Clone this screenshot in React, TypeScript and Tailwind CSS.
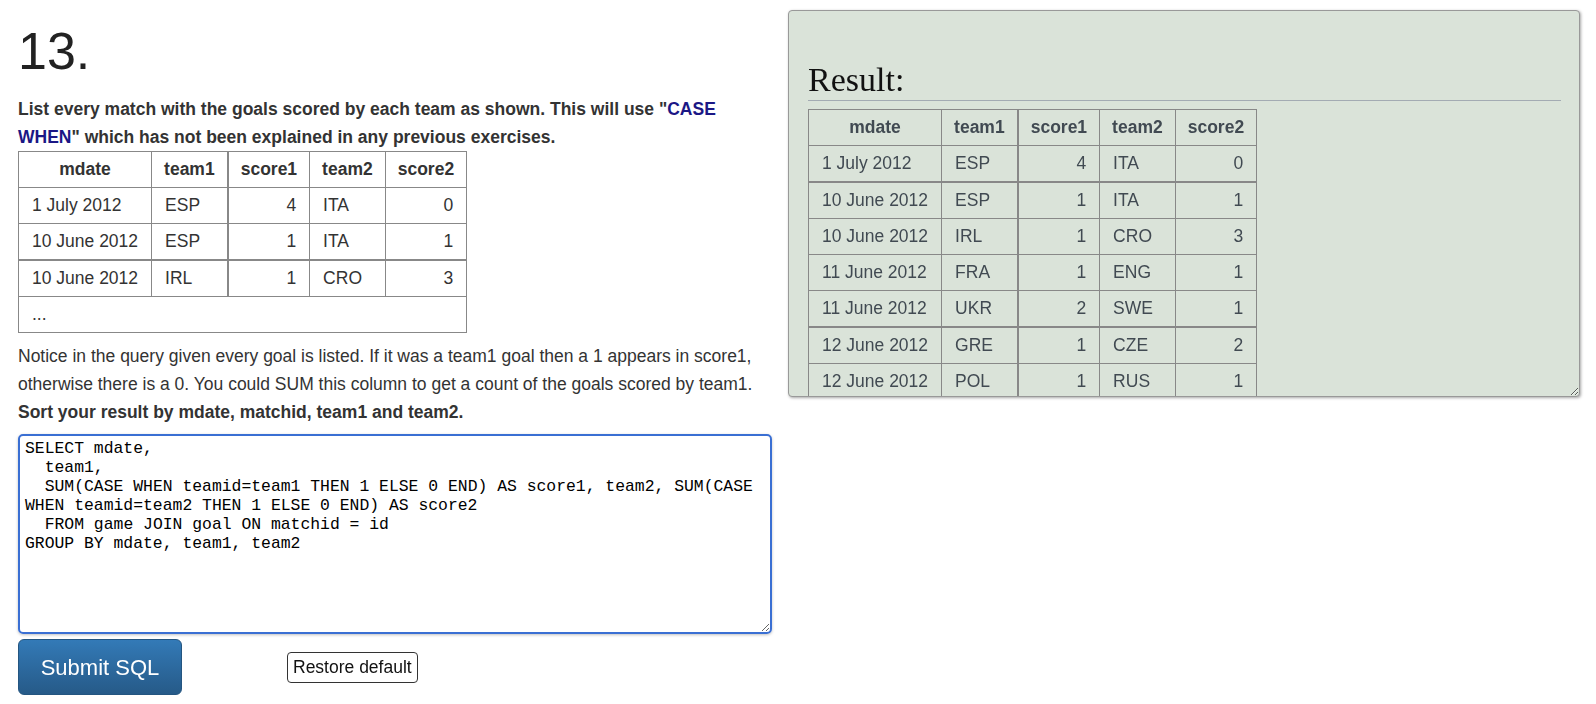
import { useEffect, useRef } from 'react'

const sql = `SELECT mdate,
  team1,
  SUM(CASE WHEN teamid=team1 THEN 1 ELSE 0 END) AS score1, team2, SUM(CASE WHEN teamid=team2 THEN 1 ELSE 0 END) AS score2
  FROM game JOIN goal ON matchid = id
GROUP BY mdate, team1, team2`

const sample = [
  ['1 July 2012', 'ESP', 4, 'ITA', 0],
  ['10 June 2012', 'ESP', 1, 'ITA', 1],
  ['10 June 2012', 'IRL', 1, 'CRO', 3],
]

const results = [
  ['1 July 2012', 'ESP', 4, 'ITA', 0],
  ['10 June 2012', 'ESP', 1, 'ITA', 1],
  ['10 June 2012', 'IRL', 1, 'CRO', 3],
  ['11 June 2012', 'FRA', 1, 'ENG', 1],
  ['11 June 2012', 'UKR', 2, 'SWE', 1],
  ['12 June 2012', 'GRE', 1, 'CZE', 2],
  ['12 June 2012', 'POL', 1, 'RUS', 1],
  ['14 June 2012', 'ESP', 4, 'IRL', 0],
  ['14 June 2012', 'ITA', 1, 'CRO', 1],
]

const cols = ['mdate', 'team1', 'score1', 'team2', 'score2']

// rows whose top rule renders heavier in the original
const thickLeft = [2]
const thickResult = [1, 5]

function DataTable({ rows, thick, more }: { rows: (string | number)[][]; thick: number[]; more?: boolean }) {
  const cell = 'border border-[#888] py-[7px] leading-[21px]'
  return (
    <table className="border-collapse">
      <thead>
        <tr>
          {cols.map((c) => (
            <th key={c} className={`${cell} px-[12px] font-bold text-center ${c === 'score1' ? 'border-l-2' : ''}`}>
              {c}
            </th>
          ))}
        </tr>
      </thead>
      <tbody>
        {rows.map((r, i) => (
          <tr key={i}>
            {r.map((v, j) => (
              <td
                key={j}
                className={`${cell} px-[13px] ${typeof v === 'number' ? 'text-right' : 'text-left'} ${
                  j === 2 ? 'border-l-2' : ''
                } ${thick.includes(i) ? 'border-t-2' : ''}`}
              >
                {v}
              </td>
            ))}
          </tr>
        ))}
        {more && (
          <tr>
            <td colSpan={5} className={`${cell} px-[13px]`}>
              ...
            </td>
          </tr>
        )}
      </tbody>
    </table>
  )
}

export default function App() {
  const ref = useRef<HTMLTextAreaElement>(null)

  useEffect(() => {
    const el = ref.current
    if (el) {
      el.focus()
      el.setSelectionRange(sql.length, sql.length)
    }
  }, [])

  return (
    <div className="flex items-start gap-4 pl-[18px] min-h-screen bg-white text-[17.5px] text-[#333] font-['Liberation_Sans',Arial,sans-serif]">
      {/* question column */}
      <div className="w-[754px] shrink-0">
        <h1 className="mt-[25px] text-[52px] leading-none text-[#222]">13.</h1>
        <p className="mt-[18px] font-bold leading-[28px]">
          List every match with the goals scored by each team as shown. This will use "
          <a className="text-[#1b1785]">CASE WHEN</a>" which has not been explained in any previous exercises.
        </p>
        <DataTable rows={sample} thick={thickLeft} more />
        <p className="mt-[9px] leading-[28px]">
          Notice in the query given every goal is listed. If it was a team1 goal then a 1 appears in score1,
          otherwise there is a 0. You could SUM this column to get a count of the goals scored by team1.
          <br />
          <b>Sort your result by mdate, matchid, team1 and team2.</b>
        </p>
        <textarea
          ref={ref}
          defaultValue={sql}
          spellCheck={false}
          className="mt-[8px] block w-full h-[200px] border-2 border-[#3a6fd3] rounded-[5px] pl-[5px] pr-[3px] pt-[3px] outline-none shadow-[0_1px_3px_rgba(0,0,0,0.25)] text-[16.4px] leading-[19px] text-black caret-black font-['Liberation_Mono','Courier_New',monospace]"
        />
        <div className="mt-[5px] flex items-center">
          <button className="w-[164px] h-[56px] rounded-[6px] border border-[#245580] bg-linear-to-b from-[#337ab7] to-[#265a88] text-white text-[22px]">
            Submit SQL
          </button>
          <button className="ml-[105px] h-[31px] px-[5px] rounded-[4px] border border-[#333] bg-white text-[17.5px] text-[#111]">
            Restore default
          </button>
        </div>
      </div>

      {/* result panel */}
      <div className="mt-[10px] w-[792px] h-[387px] shrink-0 overflow-hidden resize rounded-[4px] border border-[#999] bg-[#dae3d9] shadow-[1px_1px_3px_rgba(0,0,0,0.35)] pl-[19px] pr-[18px] pt-[52px] text-[#414a52]">
        <h2 className="text-[34px] leading-none text-[#111] font-['Liberation_Serif',Georgia,serif]">Result:</h2>
        <hr className="mt-[3px] border-0 border-t border-[#a3abb3]" />
        <div className="mt-[8px]">
          <DataTable rows={results} thick={thickResult} />
        </div>
      </div>
    </div>
  )
}
